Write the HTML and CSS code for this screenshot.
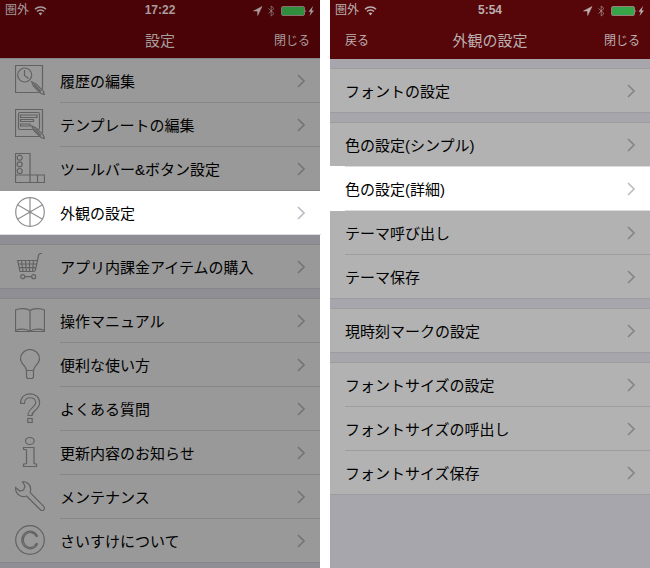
FILE: index.html
```
<!DOCTYPE html>
<html lang="ja">
<head>
    <meta charset="UTF-8">
    <meta name="viewport" content="width=device-width, initial-scale=1.0">
    <title>設定</title>
    <link rel="stylesheet" href="styles.css">
</head>
<body>
    <!-- shared status bar icons -->
    <svg class="sprite" aria-hidden="true">
        <symbol id="wifi" viewBox="0 0 13 11">
            <path d="M1 4.2C4 1.2 9 1.2 12 4.2M3 6.5c2-2 5-2 7 0" fill="none" stroke="currentColor" stroke-width="1.6"/>
            <path d="M4.6 8.2c1.1-1 2.7-1 3.8 0L6.5 10.4z" fill="currentColor"/>
        </symbol>
        <symbol id="status" viewBox="0 0 62 12">
            <path d="M9 1.5L.5 6h4l.2 4.500z" fill="currentColor" stroke="currentColor" stroke-width=".5"/>
            <path d="M15.500 3.500l5.500 5-2.800 2.500V1L21 3.500l-5.500 5" fill="none" stroke="currentColor" stroke-opacity=".6"/>
            <rect x="28.500" y="1.500" width="23" height="9" rx="1.500" fill="none" stroke="currentColor" stroke-opacity=".7"/>
            <rect class="charge" x="29" y="2" width="22" height="8"/>
            <path d="M52.500 4.500q1.500 1.500 0 3z" fill="currentColor"/>
            <path d="M60 1L55.500 6.700h2.300L56.500 11l4.500-5.600h-2.300z" fill="currentColor"/>
        </symbol>
    </svg>

    <div class="screens">
        <section class="phone phone-main">
            <header>
                <div class="status">
                    <span class="carrier">圏外 <svg class="wifi"><use href="#wifi"/></svg></span>
                    <span class="time">17:22</span>
                    <svg class="indicators"><use href="#status"/></svg>
                </div>
                <div class="navbar">
                    <h1>設定</h1>
                    <button type="button" class="close">閉じる</button>
                </div>
            </header>
            <ul class="group first">
                <li><a href="#">
                    <svg class="icon" viewBox="0 0 30 30">
                        <path d="M27.500 24V.5H.5v27H24"/>
                        <circle cx="9.700" cy="10" r="7"/>
                        <path d="M9.500 5v5.500l4 3M16.700 17l2 4.500 7.300 7 3.300 1-1-3.500-7.300-7zM19 19.500l7 7"/>
                    </svg>
                    <span class="label">履歴の編集</span></a></li>
                <li><a href="#">
                    <svg class="icon" viewBox="0 0 30 30">
                        <path d="M27.500 24V.5H.5v27H24"/>
                        <path d="M21.500 20.500h1.500q1.500 0 1.500-1.500V5q0-1.500-1.500-1.500H5Q3.500 3.500 3.500 5v14q0 1.500 1.500 1.500h12.500"/>
                        <path d="M5.500 6h16.500v2.500h-16.500zM5.500 10.500h13v2h-13zM5.500 15h9.500v2h-9.500z"/>
                        <path d="M16.700 17l2 4.500 7.300 7 3.300 1-1-3.500-7.300-7zM19 19.500l7 7"/>
                    </svg>
                    <span class="label">テンプレートの編集</span></a></li>
                <li><a href="#">
                    <svg class="icon" viewBox="0 0 30 30">
                        <path d="M.5.5h14.500v21.500h14.500v7.500H.5zM.5 22h14.500v7.500M22.500 22v7.500"/>
                        <circle cx="4.700" cy="4.700" r="2.500"/>
                        <circle cx="4.700" cy="11.300" r="2.500"/>
                        <circle cx="4.700" cy="18" r="2.500"/>
                    </svg>
                    <span class="label">ツールバー&amp;ボタン設定</span></a></li>
                <li class="current"><a href="#" aria-current="page">
                    <svg class="icon" viewBox="0 0 30 30">
                        <circle cx="15" cy="15" r="14.300"/>
                        <path d="M15 .5v29M2.500 7.800l25 14.400M27.500 7.800l-25 14.400"/>
                        <circle cx="15" cy="15" r="1"/>
                    </svg>
                    <span class="label">外観の設定</span></a></li>
            </ul>
            <ul class="group">
                <li><a href="#">
                    <svg class="icon" viewBox="0 0 30 30">
                        <path d="M27 2.500h-1.500Q24 2.500 23.500 4.500L20.500 18.500Q20 20.500 18 20.500H5L2.700 9.500h19.700"/>
                        <path d="M3.500 13h18M4.300 16.700h16.500M6.500 9.500l1.500 11M10.500 9.500l.8 11M14.500 9.500v11M18.500 9.500l-1 11M9.700 25.700h7"/>
                        <circle cx="7.700" cy="25.700" r="2"/>
                        <circle cx="18.700" cy="25.700" r="2"/>
                    </svg>
                    <span class="label">アプリ内課金アイテムの購入</span></a></li>
            </ul>
            <ul class="group">
                <li><a href="#">
                    <svg class="icon" viewBox="0 0 30 30">
                        <path d="M15 5.500C12 3 4 3 .5 5v21.500h29V5C26 3 18 3 15 5.500zV26"/>
                        <path d="M.5 25.500c4-2 11-2 14.500.7 3.500-2.700 10.500-2.700 14.500-.7"/>
                    </svg>
                    <span class="label">操作マニュアル</span></a></li>
                <li><a href="#">
                    <svg class="icon" viewBox="0 0 30 30">
                        <path d="M11.500 21.500C11.500 17 5.500 15 5.500 9.700a9.500 9.200 0 0 1 19 0c0 5.300-6 7.300-6 11.800z"/>
                        <path d="M11.500 21.500v6q0 2 2 2h3q2 0 2-2v-6"/>
                    </svg>
                    <span class="label">便利な使い方</span></a></li>
                <li><a href="#">
                    <svg class="icon" viewBox="0 0 30 30">
                        <path class="thick" d="M7.500 11C7.500 5.500 10.500 2.800 15 2.800s7.700 2.800 7.700 7c0 6-7.700 6-7.700 13.200"/>
                        <path class="hollow" d="M7.500 9.900C7.900 5.500 10.500 2.800 15 2.800s7.700 2.800 7.700 7c0 6-7.600 6-7.700 12.100"/>
                        <rect x="12.800" y="25.500" width="4.400" height="4"/>
                    </svg>
                    <span class="label">よくある質問</span></a></li>
                <li><a href="#">
                    <svg class="icon" viewBox="0 0 30 30">
                        <ellipse cx="14.800" cy="4" rx="4.300" ry="3.500"/>
                        <path d="M8.500 10.500h10.500v16l2.500.7v2.300h-13v-2.300l3-.7v-13.500l-3-.7z"/>
                    </svg>
                    <span class="label">更新内容のお知らせ</span></a></li>
                <li><a href="#">
                    <svg class="icon" viewBox="0 0 30 30">
                        <path d="M7.500 .8C12 .3 16 4 15.700 8.500c0 1.300-.3 2.200-.7 3L28.700 25.300c2.300 2.400-1 5.800-3.400 3.500L11.500 15C6 17 .3 13 .6 6.500l4 3.500 4-1 1.400-4z"/>
                    </svg>
                    <span class="label">メンテナンス</span></a></li>
                <li><a href="#">
                    <svg class="icon" viewBox="0 0 30 30">
                        <circle cx="15" cy="15" r="14.300"/>
                        <path d="M22.500 11A8.300 8.800 0 1 0 22.500 19L21.300 18.500A6.900 7.500 0 1 1 21.300 11.500z"/>
                    </svg>
                    <span class="label">さいすけについて</span></a></li>
            </ul>
        </section>

        <section class="phone phone-detail">
            <header>
                <div class="status">
                    <span class="carrier">圏外 <svg class="wifi"><use href="#wifi"/></svg></span>
                    <span class="time">5:54</span>
                    <svg class="indicators"><use href="#status"/></svg>
                </div>
                <div class="navbar">
                    <button type="button" class="back">戻る</button>
                    <h1>外観の設定</h1>
                    <button type="button" class="close">閉じる</button>
                </div>
            </header>
            <ul class="group">
                <li><a href="#"><span class="label">フォントの設定</span></a></li>
            </ul>
            <ul class="group">
                <li><a href="#"><span class="label">色の設定(シンプル)</span></a></li>
                <li class="current"><a href="#" aria-current="page"><span class="label">色の設定(詳細)</span></a></li>
                <li><a href="#"><span class="label">テーマ呼び出し</span></a></li>
                <li><a href="#"><span class="label">テーマ保存</span></a></li>
            </ul>
            <ul class="group">
                <li><a href="#"><span class="label">現時刻マークの設定</span></a></li>
            </ul>
            <ul class="group">
                <li><a href="#"><span class="label">フォントサイズの設定</span></a></li>
                <li><a href="#"><span class="label">フォントサイズの呼出し</span></a></li>
                <li><a href="#"><span class="label">フォントサイズ保存</span></a></li>
            </ul>
        </section>
    </div>
</body>
</html>
```
FILE: styles.css
```
* {
    box-sizing: border-box;
}
body {
    margin: 0;
    background-color: #fff;
    font-family: "Liberation Sans", "Noto Sans CJK JP", sans-serif;
    font-size: 15px;
    color: #000;
}
.sprite {
    display: none;
}
.screens {
    display: grid;
    grid-template-columns: 1fr 1fr;
    gap: 10px;
    min-height: 100vh;
}

/* each screen is dimmed by a different amount */
.phone {
    background-color: var(--gap);
}
.phone-main {
    --bar: #4a0408;
    --bar-text: #a89c9d;
    --gap: #8f8e94;
    --cell: #999;
    --line: #868688;
    --icon: #626262;
    --arrow: #747477;
    --charge: #2f8f3f;
}
.phone-detail {
    --bar: #560609;
    --bar-text: #bbafb0;
    --gap: #a7a6ac;
    --cell: #b2b2b2;
    --line: #9d9da0;
    --arrow: #858589;
    --charge: #37a648;
}

header {
    height: 59px;
    background-color: var(--bar);
    color: var(--bar-text);
}
.phone-main header {
    border-bottom: 1px solid var(--line);
}
.status,
.navbar {
    display: grid;
    grid-template-columns: 1fr auto 1fr;
    align-items: center;
}
.status {
    height: 21px;
    padding: 0 5px;
    font-size: 12px;
    line-height: 21px;
}
.carrier {
    display: flex;
    align-items: center;
    gap: 5px;
}
.wifi {
    width: 13px;
    height: 11px;
}
.time {
    font-size: 12px;
    font-weight: bold;
}
.indicators {
    width: 62px;
    height: 12px;
    justify-self: end;
}
.charge {
    fill: var(--charge);
}
.navbar {
    height: 36px;
    padding: 0 10px;
}
.navbar h1 {
    grid-column: 2;
    margin: 0;
    font-size: 15px;
    font-weight: normal;
}
.navbar button {
    padding: 0;
    border: none;
    background: none;
    font-family: inherit;
    font-size: 12px;
    color: inherit;
    cursor: pointer;
}
.back {
    justify-self: start;
    margin-left: 5px;
}
.close {
    grid-column: 3;
    justify-self: end;
}

.group {
    margin: 9px 0 0;
    padding: 0;
    list-style: none;
    background-color: var(--cell);
    border-top: 1px solid var(--line);
}
.group.first {
    margin-top: 0;
    border-top: none;
}
.group li {
    height: 44px;
    background-color: var(--cell);
}
.group li:last-child {
    border-bottom: 1px solid var(--line);
}
.group a {
    display: flex;
    align-items: flex-start;
    gap: 15px;
    height: 100%;
    padding-left: 15px;
    color: inherit;
    text-decoration: none;
}
.icon {
    flex: none;
    width: 30px;
    height: 30px;
    margin-top: 6px;
    fill: none;
    stroke: var(--icon);
    stroke-width: 1.2;
}
.icon .thick {
    stroke-width: 5;
}
.icon .hollow {
    stroke: var(--cell);
    stroke-width: 2.8;
}
.label {
    display: flex;
    flex: 1;
    align-items: center;
    justify-content: space-between;
    height: 100%;
    padding-right: 15px;
    border-bottom: 1px solid var(--line);
}
.group li:last-child .label {
    border-bottom: none;
}
.label::after {
    content: "";
    width: 8px;
    height: 14px;
    background-color: var(--arrow);
    mask: url("data:image/svg+xml,%3Csvg xmlns='http://www.w3.org/2000/svg' viewBox='0 0 8 14'%3E%3Cpath d='M1 1l6 6-6 6' fill='none' stroke='black' stroke-width='1.6'/%3E%3C/svg%3E") no-repeat center;
}

/* the highlighted row stands out of the dimmed screen by a pixel */
.group .current {
    --cell: #fff;
    --line: #dcdcde;
    --icon: #909090;
    --arrow: #bcbcc2;
}
.phone-main .current {
    margin-right: -1px;
}
.phone-main .current .label {
    padding-right: 16px;
}
.phone-detail .current {
    height: 45px;
    margin-top: -1px;
    margin-left: -1px;
}
.phone-detail .current a {
    padding-left: 16px;
}
.phone-detail .current .label {
    border-top: 1px solid var(--line);
}
```
